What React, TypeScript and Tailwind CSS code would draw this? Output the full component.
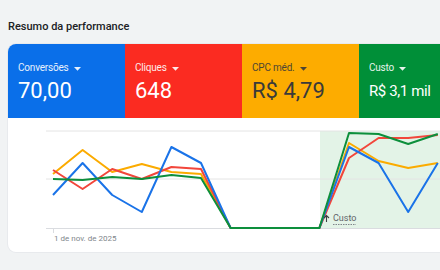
import React from 'react';

type Metric = {
  label: string;
  value: string;
  bg: string;
  text: string;
  valueSize: string;
};

const METRICS: Metric[] = [
  { label: 'Conversões', value: '70,00', bg: 'bg-[#0a6fe9]', text: 'text-white', valueSize: 'text-[22px]' },
  { label: 'Cliques', value: '648', bg: 'bg-[#fb2b21]', text: 'text-white', valueSize: 'text-[22px]' },
  { label: 'CPC méd.', value: 'R$ 4,79', bg: 'bg-[#fdac00]', text: 'text-[#3a3a3a]', valueSize: 'text-[22px]' },
  { label: 'Custo', value: 'R$ 3,1 mil', bg: 'bg-[#008f38]', text: 'text-white', valueSize: 'text-[15px] tracking-[-0.4px]' },
];

const xs = Array.from({ length: 14 }, (_, i) => 45 + i * 29.6);

const SERIES = [
  { color: '#fbab00', ys: [56, 32, 54, 46, 54, 56, 110, 110, 110, 110, 25, 43, 50, 45] },
  { color: '#f2463b', ys: [52, 71, 51, 61, 49, 51, 110, 110, 110, 110, 40, 20, 20, 17] },
  { color: '#1a73e8', ys: [77, 45, 77, 94, 29, 45, 110, 110, 110, 110, 29, 45, 94, 45] },
  { color: '#0d8f3c', ys: [61, 62, 59, 61, 57, 60, 110, 110, 110, 110, 15, 16, 26, 16] },
];

const Caret: React.FC = () => (
  <svg width="7" height="4" viewBox="0 0 7 4" className="ml-[5px] mt-[1px]">
    <path d="M0 0h7L3.5 3.8z" fill="currentColor" />
  </svg>
);

const MetricTile: React.FC<{ metric: Metric }> = ({ metric }) => (
  <div className={`w-[117px] shrink-0 h-[74px] pl-[10px] pt-[16px] ${metric.bg} ${metric.text}`}>
    <div className="flex items-center text-[10px] leading-[16px] tracking-[-0.2px] opacity-90">
      <span>{metric.label}</span>
      <Caret />
    </div>
    <div className={`${metric.valueSize} leading-[30px] flex items-center h-[30px]`}>{metric.value}</div>
  </div>
);

const PerformanceChart: React.FC = () => (
  <svg width="472" height="134" viewBox="0 0 472 134" className="block">
    <rect x="312" y="13" width="160" height="97" fill="#e3f3e7" />
    <line x1="38" y1="13" x2="472" y2="13" stroke="#e4e4e4" strokeWidth="1" />
    <line x1="38" y1="61" x2="472" y2="61" stroke="#e4e4e4" strokeWidth="1" />
    <line x1="38" y1="110.5" x2="472" y2="110.5" stroke="#dadce0" strokeWidth="1" />
    <line x1="45.5" y1="110" x2="45.5" y2="115" stroke="#dadce0" strokeWidth="1" />
    {SERIES.map((s) => (
      <polyline
        key={s.color}
        points={s.ys.map((y, i) => `${xs[i]},${y}`).join(' ')}
        fill="none"
        stroke={s.color}
        strokeWidth="2"
        strokeLinejoin="round"
      />
    ))}
    <text x="46" y="123" fontSize="8" fill="#80868b" fontFamily="Roboto, sans-serif">
      1 de nov. de 2025
    </text>
    <path d="M318.5 104V97.5M316 100l2.5-2.5 2.5 2.5" stroke="#3c4043" strokeWidth="1.1" fill="none" />
    <text x="325" y="103" fontSize="9" fill="#5f6368" fontFamily="Roboto, sans-serif">
      Custo
    </text>
    <line x1="325" y1="106.5" x2="348" y2="106.5" stroke="#80868b" strokeWidth="1" strokeDasharray="1.5 1" />
  </svg>
);

const App: React.FC = () => {
  return (
    <div className="w-[440px] h-[270px] overflow-hidden bg-[#f1f3f4] font-['Roboto',sans-serif]">
      <div className="pl-2 pt-[19px]">
        <h2 className="text-[11px] leading-[16px] font-medium text-[#202124] mb-[9px]">Resumo da performance</h2>
        <div className="w-[480px] rounded-lg overflow-hidden bg-white shadow-[0_0_0_1px_#e8eaed]">
          <div className="flex">
            {METRICS.map((m) => (
              <MetricTile key={m.label} metric={m} />
            ))}
          </div>
          <PerformanceChart />
        </div>
      </div>
    </div>
  );
};

export default App;
